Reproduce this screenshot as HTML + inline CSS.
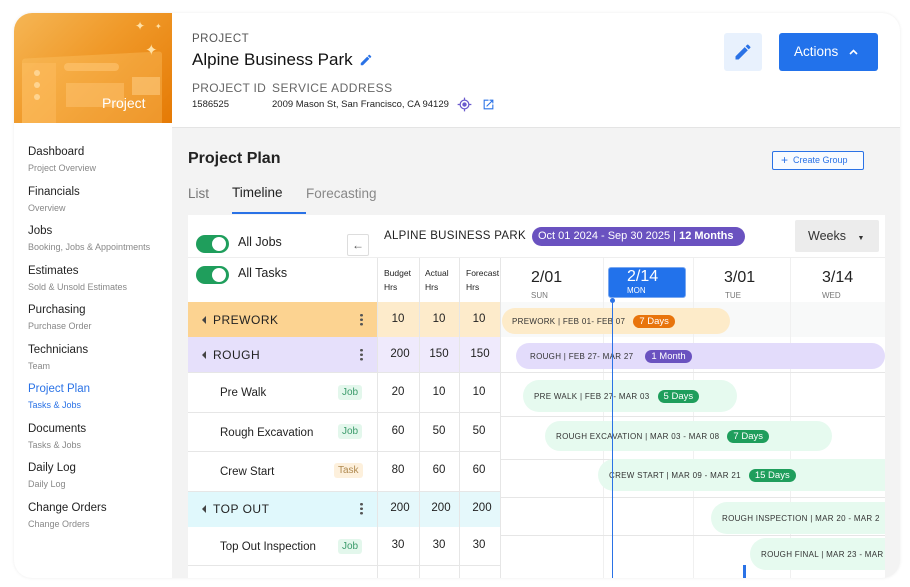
<!DOCTYPE html>
<html><head><meta charset="utf-8"><style>
*{margin:0;padding:0;box-sizing:border-box}
body{width:910px;height:587px;background:#fff;font-family:"Liberation Sans",sans-serif;position:relative;overflow:hidden;color:#222}
.a{position:absolute}
.frame{left:14px;top:13px;width:886px;height:565px;border-radius:18px;overflow:hidden;background:#f3f3f3;box-shadow:0 0 3px rgba(0,0,0,.08)}
.t{position:absolute;white-space:nowrap}
.nav .h{font-size:11.5px;color:#222}
.nav .s{font-size:9px;color:#888}
.bold{font-size:12px;letter-spacing:.5px}
.num{font-size:11.5px;color:#222;text-align:center;width:40px}
.tag{position:absolute;font-size:10px;padding:2px 4px;border-radius:3px;color:#3a9a6a;background:#e3f7ec}
.bar{position:absolute;height:26px;border-radius:13px;font-size:8px;letter-spacing:.3px;color:#333;display:flex;align-items:center;padding-left:14px;white-space:nowrap;overflow:hidden}
.pill{display:inline-block;margin-left:8px;padding:1px 6px;border-radius:7px;color:#fff;font-size:9.5px;letter-spacing:0}
.hl{position:absolute;height:1px;background:#e6e6e6}
.vl{position:absolute;width:1px;background:#e6e6e6}
.dots{position:absolute;width:3px;height:13px;background:radial-gradient(circle,#555 1.3px,transparent 1.5px) 0 0/3px 4.5px repeat-y}
.tri{position:absolute;width:0;height:0;border-top:4px solid transparent;border-bottom:4px solid transparent;border-right:4px solid #444}
</style></head><body>
<div class="a frame">
  <div class="a" style="left:0;top:0;width:158px;height:565px;background:#fff"></div>
  <div class="a" style="left:0;top:0;width:158px;height:110px;background:linear-gradient(135deg,#f5b655 0%,#f09a2a 45%,#e57a05 100%);overflow:hidden">
    <div class="a" style="left:8px;top:42px;width:140px;height:80px;background:rgba(255,200,110,.35);border-radius:3px;transform:skewY(-3deg)"></div>
    <div class="a" style="left:8px;top:50px;width:34px;height:70px;background:rgba(255,190,100,.45)"></div>
    <div class="a" style="left:50px;top:50px;width:55px;height:8px;border-radius:4px;background:rgba(255,200,120,.55)"></div>
    <div class="a" style="left:52px;top:70px;width:58px;height:24px;background:rgba(255,200,120,.45)"></div>
    <div class="a" style="left:118px;top:64px;width:28px;height:18px;background:rgba(255,210,140,.5)"></div>
    <div class="a" style="left:20px;top:57px;width:6px;height:6px;border-radius:50%;background:rgba(255,220,160,.8)"></div>
    <div class="a" style="left:20px;top:69px;width:6px;height:6px;border-radius:50%;background:rgba(255,220,160,.8)"></div>
    <div class="a" style="left:20px;top:81px;width:6px;height:6px;border-radius:50%;background:rgba(255,220,160,.8)"></div>
    <div class="t" style="left:121px;top:6px;color:#ffe2a8;font-size:12px">✦</div>
    <div class="t" style="left:141px;top:9px;color:#ffe2a8;font-size:8px">✦</div>
    <div class="t" style="left:131px;top:28px;color:#ffe2a8;font-size:15px">✦</div>
    <div class="t" style="left:88px;top:82px;color:#fff;font-size:14px">Project</div>
  </div>
  <div class="nav">
    <div class="t h" style="left:14px;top:133px">Dashboard</div><div class="t s" style="left:14px;top:150px">Project Overview</div>
    <div class="t h" style="left:14px;top:173px">Financials</div><div class="t s" style="left:14px;top:190px">Overview</div>
    <div class="t h" style="left:14px;top:212px">Jobs</div><div class="t s" style="left:14px;top:229px">Booking, Jobs &amp; Appointments</div>
    <div class="t h" style="left:14px;top:252px">Estimates</div><div class="t s" style="left:14px;top:269px">Sold &amp; Unsold Estimates</div>
    <div class="t h" style="left:14px;top:291px">Purchasing</div><div class="t s" style="left:14px;top:308px">Purchase Order</div>
    <div class="t h" style="left:14px;top:331px">Technicians</div><div class="t s" style="left:14px;top:348px">Team</div>
    <div class="t h" style="left:14px;top:370px;color:#2a72e6">Project Plan</div><div class="t s" style="left:14px;top:387px;color:#2a72e6">Tasks &amp; Jobs</div>
    <div class="t h" style="left:14px;top:410px">Documents</div><div class="t s" style="left:14px;top:427px">Tasks &amp; Jobs</div>
    <div class="t h" style="left:14px;top:449px">Daily Log</div><div class="t s" style="left:14px;top:466px">Daily Log</div>
    <div class="t h" style="left:14px;top:489px">Change Orders</div><div class="t s" style="left:14px;top:506px">Change Orders</div>
  </div>
  <div class="a" style="left:158px;top:0;width:728px;height:115px;background:#fff;border-bottom:1px solid #e4e4e4"></div>
  <div class="t" style="left:178px;top:20px;font-size:11.5px;color:#555;letter-spacing:.5px">PROJECT</div>
  <div class="t" style="left:178px;top:37px;font-size:17px;color:#111">Alpine Business Park</div>
  <svg class="a" style="left:345px;top:40px" width="14" height="14" viewBox="0 0 24 24"><path d="M3 17.25V21h3.75L17.8 9.94l-3.75-3.75L3 17.25zM20.7 7.04a1 1 0 000-1.41l-2.34-2.34a1 1 0 00-1.41 0l-1.83 1.83 3.75 3.75 1.83-1.83z" fill="#2a72e6"/></svg>
  <div class="t" style="left:178px;top:68px;font-size:12px;color:#666;letter-spacing:.3px">PROJECT ID</div>
  <div class="t" style="left:258px;top:68px;font-size:12px;color:#666;letter-spacing:.5px">SERVICE ADDRESS</div>
  <div class="t" style="left:178px;top:86px;font-size:9.5px;color:#222">1586525</div>
  <div class="t" style="left:258px;top:86px;font-size:9.5px;color:#222">2009 Mason St, San Francisco, CA 94129</div>
  <svg class="a" style="left:443px;top:84px" width="15" height="15" viewBox="0 0 24 24"><circle cx="12" cy="12" r="7" fill="none" stroke="#6a5acd" stroke-width="2"/><circle cx="12" cy="12" r="3.5" fill="#6a5acd"/><path d="M12 1v4M12 19v4M1 12h4M19 12h4" stroke="#6a5acd" stroke-width="2"/></svg>
  <svg class="a" style="left:468px;top:85px" width="13" height="13" viewBox="0 0 24 24"><path d="M19 19H5V5h7V3H3v18h18v-9h-2v7zM14 3v2h3.6l-9.8 9.8 1.4 1.4L19 6.4V10h2V3h-7z" fill="#2a72e6"/></svg>
  <div class="a" style="left:710px;top:20px;width:38px;height:38px;background:#e8f1fd;border-radius:3px"></div>
  <svg class="a" style="left:719px;top:29px" width="20" height="20" viewBox="0 0 24 24"><path d="M3 17.25V21h3.75L17.8 9.94l-3.75-3.75L3 17.25zM20.7 7.04a1 1 0 000-1.41l-2.34-2.34a1 1 0 00-1.41 0l-1.83 1.83 3.75 3.75 1.83-1.83z" fill="#2a72e6"/></svg>
  <div class="a" style="left:765px;top:20px;width:99px;height:38px;background:#2272eb;border-radius:3px;color:#fff;font-size:13.5px;line-height:38px;padding-left:15px">Actions <svg width="9" height="6" viewBox="0 0 9 6" style="margin-left:7px;vertical-align:1px"><path d="M1 5L4.5 1.5 8 5" stroke="#fff" stroke-width="1.6" fill="none"/></svg></div>
  <div class="t" style="left:174px;top:137px;font-size:16px;font-weight:bold;color:#222">Project Plan</div>
  <div class="a" style="left:758px;top:138px;width:92px;height:19px;border:1px solid #2a72e6;border-radius:2px;color:#2a72e6;font-size:9px;line-height:17px;padding-left:8px;background:#f8fbff"><span style="font-size:12px;vertical-align:-1px">+</span>&nbsp; Create Group</div>
  <div class="t" style="left:174px;top:173px;font-size:13.5px;color:#777">List</div>
  <div class="t" style="left:218px;top:172px;font-size:13.5px;color:#222">Timeline</div>
  <div class="t" style="left:292px;top:173px;font-size:13.5px;color:#888">Forecasting</div>
  <div class="a" style="left:218px;top:199px;width:74px;height:2px;background:#2a72e6"></div>
  <div class="a" style="left:174px;top:202px;width:697px;height:370px;background:#fff"></div>
  <div class="a" style="left:182px;top:222px;width:33px;height:18px;border-radius:9px;background:#1f9e5c"></div><div class="a" style="left:198px;top:224px;width:14px;height:14px;border-radius:50%;background:#fff"></div>
  <div class="t" style="left:224px;top:222px;font-size:12.5px">All Jobs</div>
  <div class="a" style="left:182px;top:253px;width:33px;height:18px;border-radius:9px;background:#1f9e5c"></div><div class="a" style="left:198px;top:255px;width:14px;height:14px;border-radius:50%;background:#fff"></div>
  <div class="t" style="left:224px;top:253px;font-size:12.5px">All Tasks</div>
  <div class="a" style="left:333px;top:221px;width:22px;height:22px;border:1px solid #ddd;border-radius:2px;font-size:12px;text-align:center;line-height:20px;color:#555">←</div>
  <div class="t" style="left:370px;top:217px;font-size:11.5px;letter-spacing:.3px">ALPINE BUSINESS PARK</div>
  <div class="a" style="left:518px;top:214px;width:213px;height:19px;border-radius:10px;background:#6a52c0;color:#fff;font-size:11px;line-height:19px;padding-left:6px;white-space:nowrap">Oct 01 2024 - Sep 30 2025 | <b>12 Months</b></div>
  <div class="a" style="left:781px;top:207px;width:84px;height:32px;background:#ececec;border-radius:2px;font-size:12.5px;color:#333;line-height:32px;padding-left:13px">Weeks <span style="font-size:7px;margin-left:8px">▼</span></div>
  <div class="t" style="left:370px;top:253px;font-size:8.5px;line-height:14px">Budget<br>Hrs</div>
  <div class="t" style="left:411px;top:253px;font-size:8.5px;line-height:14px">Actual<br>Hrs</div>
  <div class="t" style="left:452px;top:253px;font-size:8.5px;line-height:14px;width:34px;overflow:hidden">Forecast<br>Hrs</div>
  <div class="a" style="left:594px;top:254px;width:78px;height:31px;background:#2272eb;border-radius:3px;border:1px solid #7aa8f0"></div>
  <div class="t" style="left:517px;top:256px;font-size:16px">2/01</div><div class="t" style="left:517px;top:278px;font-size:8px;color:#777">SUN</div>
  <div class="t" style="left:613px;top:255px;font-size:16px;color:#fff">2/14</div><div class="t" style="left:613px;top:273px;font-size:8px;color:#fff">MON</div>
  <div class="t" style="left:710px;top:256px;font-size:16px">3/01</div><div class="t" style="left:711px;top:278px;font-size:8px;color:#777">TUE</div>
  <div class="t" style="left:808px;top:256px;font-size:16px">3/14</div><div class="t" style="left:808px;top:278px;font-size:8px;color:#777">WED</div>
  <div class="a" style="left:174px;top:289px;width:189px;height:35px;background:#fcd391"></div>
  <div class="a" style="left:363px;top:289px;width:123px;height:35px;background:#fdebcb"></div>
  <div class="a" style="left:486px;top:289px;width:385px;height:35px;background:#f8f9f9"></div>
  <div class="a" style="left:174px;top:324px;width:189px;height:35px;background:#e6e0fb"></div>
  <div class="a" style="left:363px;top:324px;width:123px;height:35px;background:#efeafc"></div>
  <div class="a" style="left:174px;top:478px;width:189px;height:36px;background:#e0f8fc"></div>
  <div class="a" style="left:363px;top:478px;width:123px;height:36px;background:#e5f8fb"></div>
  <div class="vl" style="left:363px;top:244px;height:330px"></div>
  <div class="vl" style="left:405px;top:244px;height:330px"></div>
  <div class="vl" style="left:445px;top:244px;height:330px"></div>
  <div class="vl" style="left:486px;top:244px;height:330px"></div>
  <div class="vl" style="left:589px;top:244px;height:330px;background:#f0f0f0"></div>
  <div class="vl" style="left:679px;top:244px;height:330px;background:#f0f0f0"></div>
  <div class="vl" style="left:776px;top:244px;height:330px;background:#f0f0f0"></div>
  <div class="hl" style="left:174px;top:244px;width:697px;background:#eee"></div>
  <div class="hl" style="left:174px;top:359px;width:697px"></div>
  <div class="hl" style="left:174px;top:399px;width:312px"></div>
  <div class="hl" style="left:174px;top:438px;width:312px"></div>
  <div class="hl" style="left:174px;top:478px;width:312px"></div>
  <div class="hl" style="left:174px;top:552px;width:312px"></div>
  <div class="hl" style="left:486px;top:403px;width:385px"></div>
  <div class="hl" style="left:486px;top:446px;width:385px"></div>
  <div class="hl" style="left:486px;top:484px;width:385px"></div>
  <div class="hl" style="left:486px;top:522px;width:385px"></div>
  <div class="tri" style="left:188px;top:303px"></div><div class="t bold" style="left:199px;top:300px">PREWORK</div><div class="dots" style="left:346px;top:300px"></div>
  <div class="tri" style="left:188px;top:338px"></div><div class="t bold" style="left:199px;top:335px">ROUGH</div><div class="dots" style="left:346px;top:335px"></div>
  <div class="t" style="left:206px;top:374px;font-size:11.5px">Pre Walk</div><div class="tag" style="left:324px;top:372px">Job</div>
  <div class="t" style="left:206px;top:414px;font-size:11.5px">Rough Excavation</div><div class="tag" style="left:324px;top:411px">Job</div>
  <div class="t" style="left:206px;top:453px;font-size:11.5px">Crew Start</div><div class="tag" style="left:320px;top:450px;color:#b08a50;background:#fdf0dc">Task</div>
  <div class="tri" style="left:188px;top:492px"></div><div class="t bold" style="left:199px;top:489px">TOP OUT</div><div class="dots" style="left:346px;top:489px"></div>
  <div class="t" style="left:206px;top:528px;font-size:11.5px">Top Out Inspection</div><div class="tag" style="left:324px;top:526px">Job</div>
  <div class="tag" style="left:324px;top:566px">Job</div>
  <div class="t num" style="left:364px;top:300px">10</div><div class="t num" style="left:405px;top:300px">10</div><div class="t num" style="left:445px;top:300px">10</div>
  <div class="t num" style="left:366px;top:335px">200</div><div class="t num" style="left:405px;top:335px">150</div><div class="t num" style="left:446px;top:335px">150</div>
  <div class="t num" style="left:364px;top:373px">20</div><div class="t num" style="left:405px;top:373px">10</div><div class="t num" style="left:445px;top:373px">10</div>
  <div class="t num" style="left:364px;top:412px">60</div><div class="t num" style="left:405px;top:412px">50</div><div class="t num" style="left:445px;top:412px">50</div>
  <div class="t num" style="left:364px;top:451px">80</div><div class="t num" style="left:405px;top:451px">60</div><div class="t num" style="left:445px;top:451px">60</div>
  <div class="t num" style="left:366px;top:489px">200</div><div class="t num" style="left:407px;top:489px">200</div><div class="t num" style="left:448px;top:489px">200</div>
  <div class="t num" style="left:364px;top:526px">30</div><div class="t num" style="left:405px;top:526px">30</div><div class="t num" style="left:445px;top:526px">30</div>
  <div class="bar" style="left:488px;top:295px;width:228px;background:#fdebc9;padding-left:10px">PREWORK | FEB 01- FEB 07<span class="pill" style="background:#e8740c">7 Days</span></div>
  <div class="bar" style="left:502px;top:330px;width:369px;background:#e3dcfb">ROUGH | FEB 27- MAR 27<span class="pill" style="background:#6a52c0;margin-left:12px">1 Month</span></div>
  <div class="bar" style="left:509px;top:367px;width:214px;height:32px;border-radius:16px;background:#e6faef;padding-left:11px">PRE WALK | FEB 27- MAR 03<span class="pill" style="background:#1f9e5c">5 Days</span></div>
  <div class="bar" style="left:531px;top:408px;width:287px;height:30px;border-radius:15px;background:#e6faef;padding-left:11px">ROUGH EXCAVATION | MAR 03 - MAR 08<span class="pill" style="background:#1f9e5c">7 Days</span></div>
  <div class="bar" style="left:584px;top:446px;width:287px;height:32px;border-radius:16px 0 0 16px;background:#e6faef;padding-left:11px">CREW START | MAR 09 - MAR 21<span class="pill" style="background:#1f9e5c">15 Days</span></div>
  <div class="bar" style="left:697px;top:489px;width:174px;height:32px;border-radius:16px 0 0 16px;background:#e6faef;padding-left:11px">ROUGH INSPECTION | MAR 20 - MAR 2</div>
  <div class="bar" style="left:736px;top:525px;width:135px;height:32px;border-radius:16px 0 0 16px;background:#e6faef;padding-left:11px">ROUGH FINAL | MAR 23 - MAR</div>
  <div class="a" style="left:729px;top:552px;width:3px;height:20px;background:#2a72e6"></div>
  <div class="a" style="left:598px;top:287px;width:1px;height:290px;background:#2a72e6"></div>
  <div class="a" style="left:596px;top:285px;width:5px;height:5px;border-radius:50%;background:#2a72e6"></div>
</div>
</body></html>
